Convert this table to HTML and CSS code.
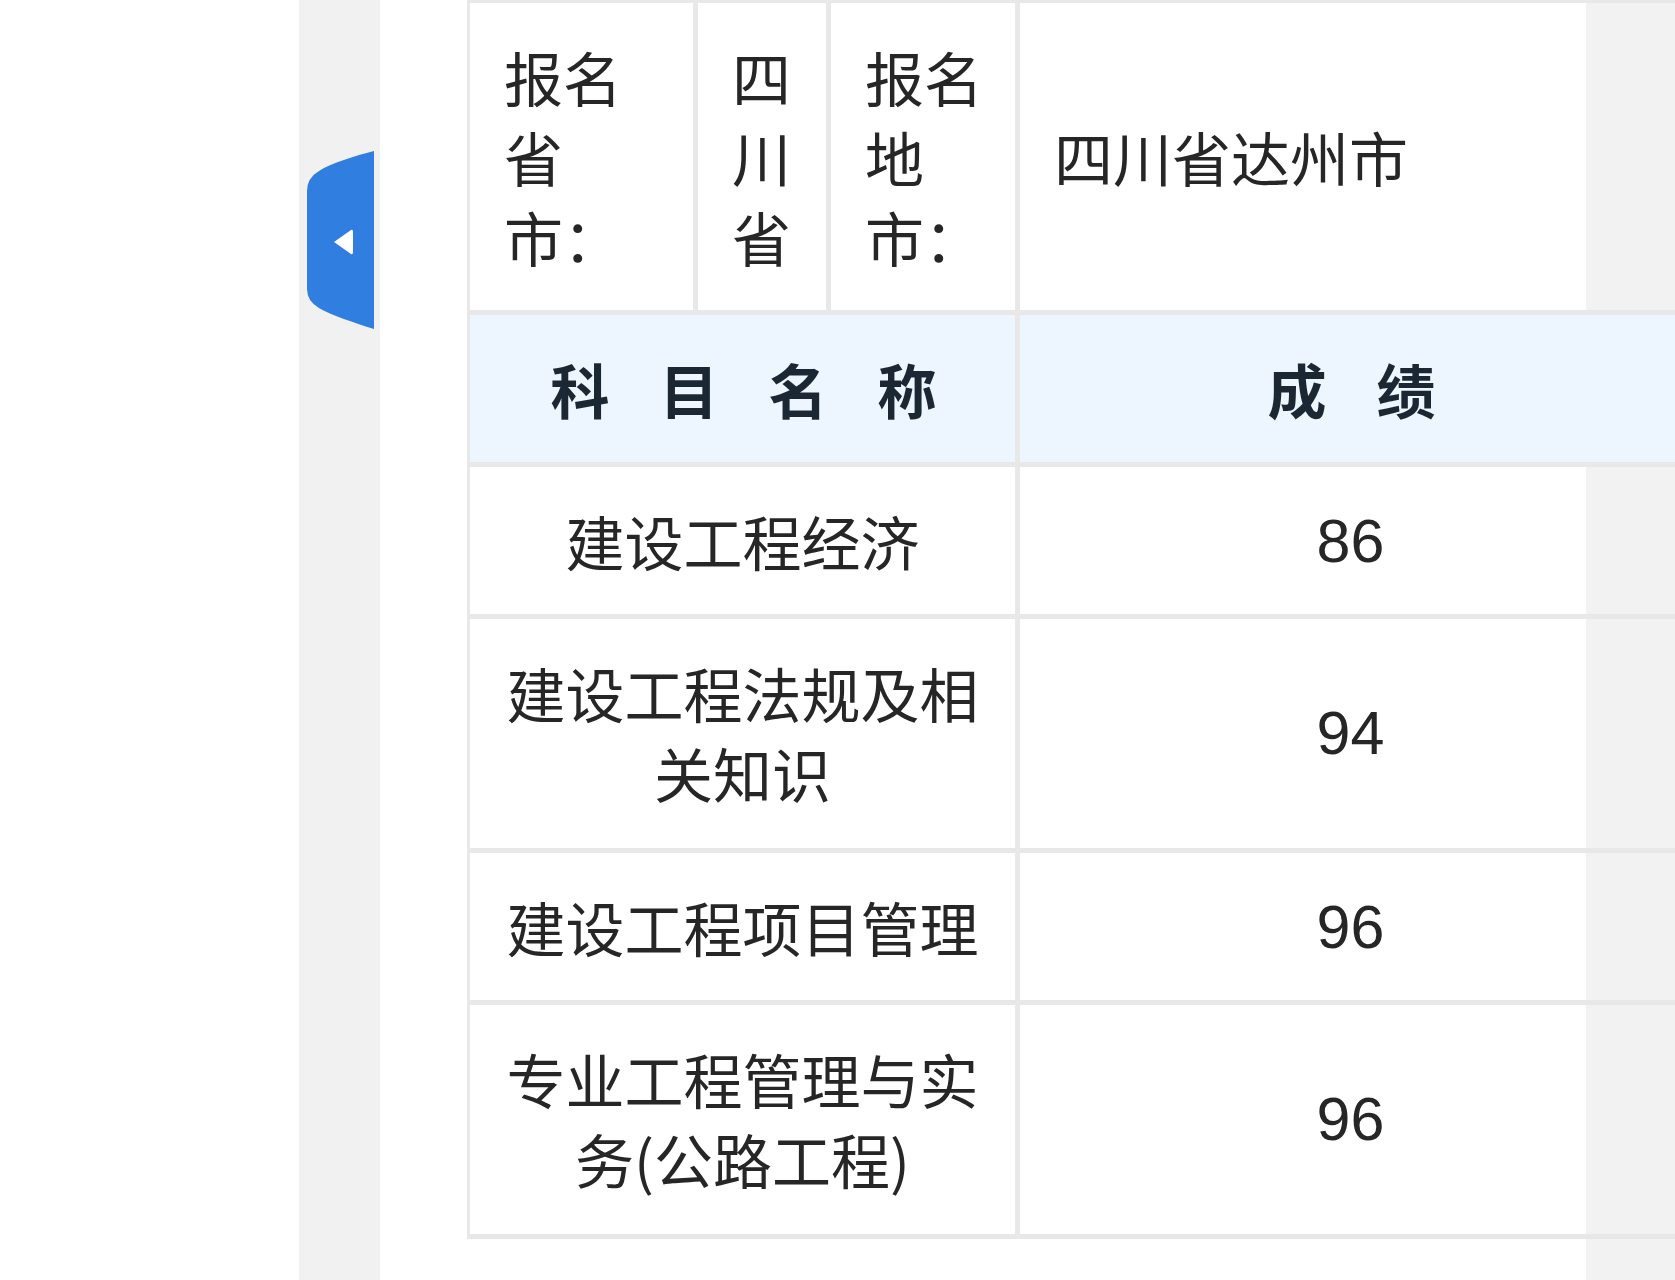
FILE: index.html
```html
<!DOCTYPE html>
<html lang="zh-CN">
<head>
<meta charset="utf-8">
<title>成绩查询</title>
<link rel="stylesheet" href="styles.css">
</head>
<body>
<div class="page">
  <div class="gutter"></div>
  <aside class="sidebar">
    <div class="handle" aria-label="收起">
      <svg width="67" height="178" viewBox="0 0 67 178" xmlns="http://www.w3.org/2000/svg">
        <path d="M67 0 C48 5 24 12 12 20 Q0 27 0 40 L0 138 Q0 150 12 157 C24 164 48 172 67 178 Z" fill="#2f7ee0"/>
        <path d="M27 91 L44 79 Q46 78 46 81 L46 101 Q46 104 44 103 Z" fill="#ffffff"/>
      </svg>
    </div>
  </aside>
  <main class="main">
    <table class="score-table">
      <tbody>
        <tr class="info-row">
          <td class="cell c1">报名省市：</td>
          <td class="cell c2">四川省</td>
          <td class="cell c3">报名地市：</td>
          <td class="cell c4">四川省达州市</td>
        </tr>
        <tr class="head-row">
          <th class="cell" colspan="3"><span class="spaced">科目名称</span></th>
          <th class="cell"><span class="spaced">成绩</span></th>
        </tr>
        <tr class="data-row">
          <td class="cell" colspan="3">建设工程经济</td>
          <td class="cell score">86</td>
        </tr>
        <tr class="data-row tall">
          <td class="cell" colspan="3">建设工程法规及相关知识</td>
          <td class="cell score">94</td>
        </tr>
        <tr class="data-row">
          <td class="cell" colspan="3">建设工程项目管理</td>
          <td class="cell score">96</td>
        </tr>
        <tr class="data-row tall">
          <td class="cell" colspan="3">专业工程管理与实务(公路工程)</td>
          <td class="cell score">96</td>
        </tr>
      </tbody>
    </table>
  </main>
  <div class="aside-right"></div>
</div>
</body>
</html>
```

FILE: styles.css
```css
html, body {
  margin: 0;
  padding: 0;
  overflow: hidden;
  background: #ffffff;
}

.page {
  display: flex;
  min-height: 100vh;
  font-family: "Noto Sans CJK SC", "Noto Sans", sans-serif;
  color: #262626;
}

.gutter {
  width: 299px;
  flex: none;
  background: #ffffff;
}

.sidebar {
  width: 81px;
  flex: none;
  background: #f1f1f1;
  padding: 151px 0 0 8px;
  box-sizing: border-box;
}

.handle {
  width: 67px;
  height: 178px;
}

.handle svg {
  display: block;
}

.main {
  width: 1206px;
  flex: none;
  background: #ffffff;
  padding-left: 87px;
  box-sizing: border-box;
  position: relative;
  z-index: 1;
}

.aside-right {
  flex: 1;
  background: #f2f2f2;
}

.score-table {
  width: 1216px;
  table-layout: fixed;
  border-collapse: separate;
  border-spacing: 0;
  border-left: 3px solid #e8e8e8;
  border-top: 3px solid #e8e8e8;
  font-size: 59px;
  line-height: 80px;
}

.cell {
  box-sizing: border-box;
  border-right: 5px solid #e8e8e8;
  border-bottom: 5px solid #e8e8e8;
  padding: 34px 32px 33px 34px;
  vertical-align: middle;
  font-weight: 400;
}

.info-row .cell {
  text-align: left;
  padding-right: 30px;
}

.c1 { width: 228px; }
.c2 { width: 133px; }
.c3 { width: 189px; }
.c4 { width: 666px; }

.head-row .cell {
  background: #edf5ff;
  font-weight: 700;
  color: #1c2734;
  text-align: center;
  white-space: nowrap;
}

.spaced {
  letter-spacing: 50px;
  margin-right: -50px;
}

.data-row .cell {
  text-align: center;
  padding-left: 33px;
  padding-right: 33px;
}

.data-row.tall .cell {
  padding-bottom: 35px;
}

.score {
  font-family: "Liberation Sans", "Noto Sans CJK SC", sans-serif;
  font-size: 61px;
}
```
